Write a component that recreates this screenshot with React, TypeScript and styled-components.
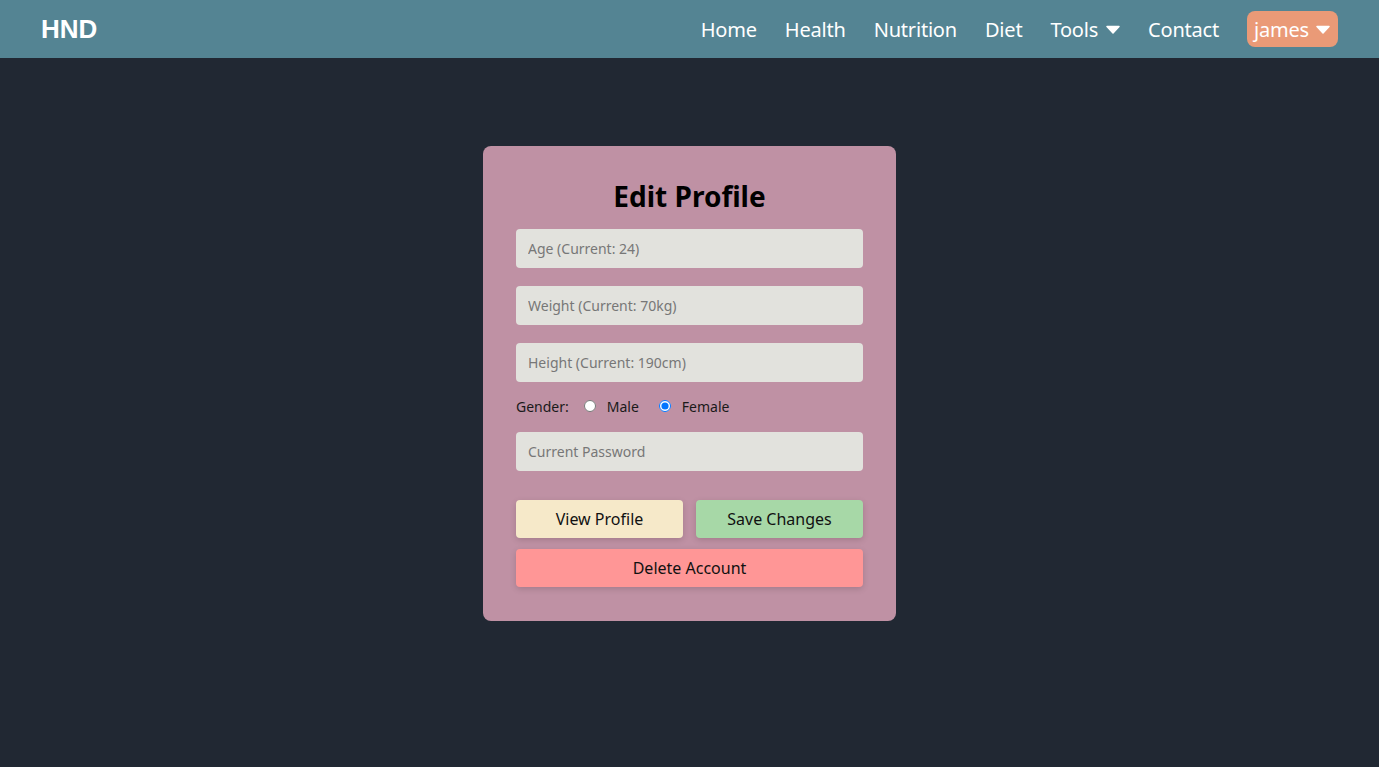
import React from "react";
import styled, { createGlobalStyle } from "styled-components";

const Global = createGlobalStyle`
  html, body { margin: 0; padding: 0; background: #212833; }
  body { font-family: "Noto Sans", "Inter", sans-serif; }
  * { box-sizing: border-box; }
`;

const Page = styled.div`
  min-height: 767px;
  background: #212833;
`;

const NavBar = styled.nav`
  height: 58px;
  background: #548493;
  display: flex;
  align-items: center;
  justify-content: space-between;
  padding: 0 41px;
`;

const Brand = styled.div`
  font-family: "Liberation Sans", Arial, sans-serif;
  font-weight: 700;
  font-size: 26px;
  color: #fff;
`;

const Links = styled.div`
  display: flex;
  align-items: center;
  gap: 28px;
`;

const NavLink = styled.a`
  color: #fff;
  font-size: 20px;
  text-decoration: none;
  display: flex;
  align-items: center;
  gap: 8px;
  letter-spacing: -0.2px;
`;

const UserButton = styled.button`
  background: #ea9a77;
  border: none;
  border-radius: 8px;
  height: 36px;
  padding: 0 8px 0 7px;
  color: #fff;
  font-family: inherit;
  font-size: 20px;
  display: flex;
  align-items: center;
  gap: 7px;
  letter-spacing: -0.2px;
`;

const Caret = () => (
  <svg width="14" height="9" viewBox="0 0 14 9">
    <path d="M1 1.5 L13 1.5 L7 8 Z" fill="#fff" stroke="#fff" strokeLinejoin="round" strokeWidth="1.5" />
  </svg>
);

const Main = styled.main`
  display: flex;
  justify-content: center;
  padding-top: 88px;
`;

const Card = styled.form`
  width: 413px;
  background: #bf91a4;
  border-radius: 8px;
  padding: 33px 33px 34px;
  display: flex;
  flex-direction: column;
`;

const Title = styled.h2`
  margin: 0 0 16px;
  text-align: center;
  font-size: 28px;
  line-height: 34px;
  font-weight: 700;
  color: #000;
`;

const Field = styled.input<{ $mb?: number }>`
  height: 39px;
  width: 100%;
  border: none;
  border-radius: 4px;
  background: #e2e2dd;
  padding: 0 12px;
  font-family: inherit;
  font-size: 14px;
  color: #333;
  margin-bottom: ${(p) => p.$mb ?? 18}px;
  &::placeholder { color: #777; }
  outline: none;
`;

const GenderRow = styled.div`
  display: flex;
  align-items: center;
  font-size: 14px;
  color: #1a1a1a;
  height: 18px;
  margin: -3px 0 17px;
`;

const RadioLabel = styled.label<{ $ml: number }>`
  display: flex;
  align-items: center;
  margin-left: ${(p) => p.$ml}px;
  gap: 11px;
  & input { margin: 0; width: 12px; height: 12px; }
`;

const ButtonRow = styled.div`
  display: grid;
  grid-template-columns: 1fr 1fr;
  gap: 13px;
  margin-top: 29px;
  margin-bottom: 11px;
`;

const ActionButton = styled.button<{ $bg: string }>`
  height: 38px;
  border: none;
  border-radius: 4px;
  background: ${(p) => p.$bg};
  font-family: inherit;
  font-size: 16px;
  color: #111;
  box-shadow: 0 2px 6px rgba(0, 0, 0, 0.15);
  cursor: pointer;
`;

export default function App() {
  return (
    <Page>
      <Global />
      <NavBar>
        <Brand>HND</Brand>
        <Links>
          <NavLink>Home</NavLink>
          <NavLink>Health</NavLink>
          <NavLink>Nutrition</NavLink>
          <NavLink>Diet</NavLink>
          <NavLink>Tools <Caret /></NavLink>
          <NavLink>Contact</NavLink>
          <UserButton>james <Caret /></UserButton>
        </Links>
      </NavBar>
      <Main>
        <Card onSubmit={(e) => e.preventDefault()}>
          <Title>Edit Profile</Title>
          <Field placeholder="Age (Current: 24)" />
          <Field placeholder="Weight (Current: 70kg)" />
          <Field placeholder="Height (Current: 190cm)" />
          <GenderRow>
            Gender:
            <RadioLabel $ml={15}><input type="radio" name="g" /> Male</RadioLabel>
            <RadioLabel $ml={20}><input type="radio" name="g" defaultChecked /> Female</RadioLabel>
          </GenderRow>
          <Field placeholder="Current Password" type="password" $mb={0} />
          <ButtonRow>
            <ActionButton type="button" $bg="#f6e9c9">View Profile</ActionButton>
            <ActionButton type="button" $bg="#a7d8a7">Save Changes</ActionButton>
          </ButtonRow>
          <ActionButton type="button" $bg="#ff9696">Delete Account</ActionButton>
        </Card>
      </Main>
    </Page>
  );
}
